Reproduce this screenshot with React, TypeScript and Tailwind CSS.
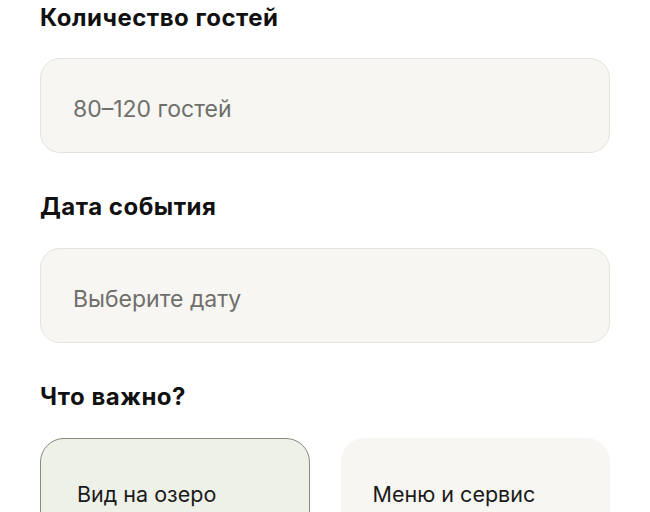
export default function App() {
  const font = { fontFamily: 'Inter, "Noto Sans", sans-serif' };
  return (
    <div className="min-h-screen bg-white px-10 pt-[3px]" style={font}>
      <div className="w-[570px]">
        <p className="text-[24px] leading-[30px] font-bold text-[#111] tracking-[0.5px]">Количество гостей</p>
        <div className="mt-[25px] h-[95px] rounded-[20px] border border-[#e6e3dc] bg-[#f7f6f2] flex items-center px-8 pt-[7px]">
          <span className="text-[23px] text-[#6f6f6c]">80–120 гостей</span>
        </div>

        <p className="mt-[39px] text-[24px] leading-[30px] font-bold text-[#111] tracking-[0.5px]">Дата события</p>
        <div className="mt-[26px] h-[95px] rounded-[20px] border border-[#e6e3dc] bg-[#f7f6f2] flex items-center px-8 pt-[7px]">
          <span className="text-[23px] text-[#6f6f6c]">Выберите дату</span>
        </div>

        <p className="mt-[39px] text-[24px] leading-[30px] font-bold text-[#111] tracking-[0.5px]">Что важно?</p>
        <div className="mt-[26px] grid grid-cols-2 gap-[31px]">
          <div className="h-[110px] rounded-[24px] border-[1.5px] border-[#868b7c] bg-[#eef1e8] px-9 pt-[39px]">
            <span className="text-[21.5px] text-[#1a1a1a]">Вид на озеро</span>
          </div>
          <div className="h-[110px] rounded-[24px] bg-[#f7f6f2] px-8 pt-[40px]">
            <span className="text-[21.5px] text-[#1a1a1a]">Меню и сервис</span>
          </div>
        </div>
      </div>
    </div>
  );
}
